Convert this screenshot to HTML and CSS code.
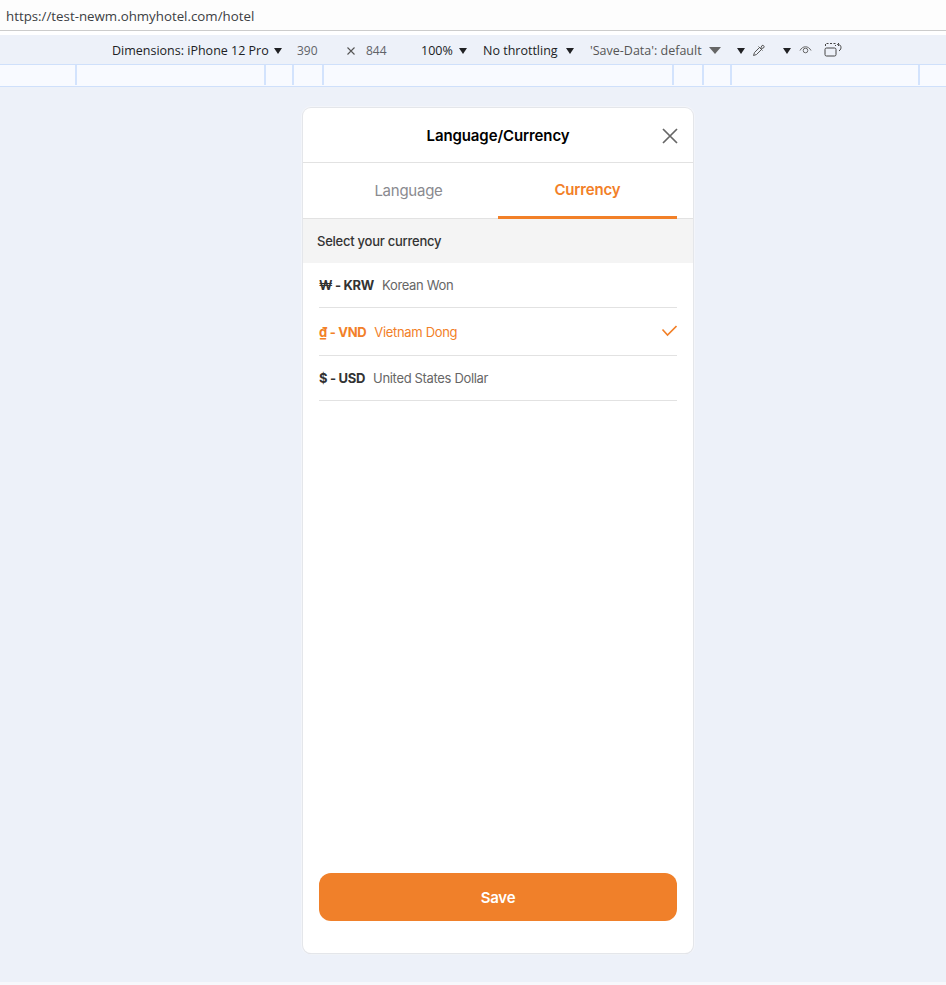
FILE: index.html
```html
<!DOCTYPE html>
<html>
<head>
	<title>hotel</title>
	<link rel="stylesheet" href="styles.css">
</head>
<body>
	<div class="urlbar">https://test-newm.ohmyhotel.com/hotel</div>
	<div class="toolbar">
		<span class="tool w-dim">Dimensions: iPhone 12 Pro <i class="caret"></i></span>
		<span class="tool num w-w">390</span>
		<svg class="times" width="10" height="10" viewBox="0 0 10 10"><path d="M1.5 1.5l7 7M8.5 1.5l-7 7" stroke="#555" stroke-width="1.1" fill="none"/></svg>
		<span class="tool num w-h">844</span>
		<span class="tool w-zoom">100% <i class="caret"></i></span>
		<span class="tool w-net">No throttling <i class="caret"></i></span>
		<span class="tool grey w-save">'Save-Data': default <i class="caret big"></i></span>
		<i class="caret c1"></i>
		<svg class="pipette" width="14" height="14" viewBox="0 0 14 14"><path d="M1.500 12.500l1-3 5-5 2 2-5 5zM6.500 3.500l4 4M8.500 5.500l1.500-3a1.500 1.500 0 0 1 2 2l-3 1.500" stroke="#555" stroke-width="1" fill="none"/></svg>
		<i class="caret c2"></i>
		<svg class="eye" width="13" height="10" viewBox="0 0 13 10"><path d="M1 5.500c2.500-5 8.500-5 11 0" stroke="#666" stroke-width="1" fill="none"/><circle cx="6.500" cy="5.500" r="2.300" stroke="#666" stroke-width="1" fill="none"/></svg>
		<svg class="rotate" width="19" height="15" viewBox="0 0 19 15"><path d="M1.500 4V1.500h10V4" stroke="#444" stroke-width="1" stroke-dasharray="2 1.500" fill="none"/><rect x="1" y="6" width="11" height="8" rx="1.500" stroke="#444" stroke-width="1" fill="none"/><path d="M13.500 2.500c3.500-.5 5 4 1.500 6.500M13.500 2.500l1.500-1.500M13.500 2.500l1.500 1.500" stroke="#444" stroke-width="1" fill="none"/></svg>
	</div>
	<div class="ruler">
		<div class="seg s1"></div>
		<div class="seg s2"></div>
		<div class="seg s3"></div>
		<div class="seg s4"></div>
		<div class="seg s5"></div>
		<div class="seg s6"></div>
		<div class="seg s7"></div>
		<div class="seg s8"></div>
		<div class="seg s9"></div>
	</div>
	<div class="stage">
		<div class="phone">
			<div class="head">
				<h1>Language/Currency</h1>
				<svg class="close" width="18" height="18" viewBox="0 0 18 18"><path d="M2 2l14 14M16 2L2 16" stroke="#666" stroke-width="1.700" fill="none"/></svg>
			</div>
			<div class="tabs">
				<div class="tab">Language</div>
				<div class="tab active">Currency</div>
			</div>
			<div class="label">Select your currency</div>
			<ul class="list">
				<li class="row r1"><b>₩ - KRW</b><span>Korean Won</span></li>
				<li class="row r2 picked"><b>₫ - VND</b><span>Vietnam Dong</span>
					<svg class="check" width="16" height="12" viewBox="0 0 16 12"><path d="M1.500 4.500l5 5.500 9-9" stroke="#f28028" stroke-width="1.600" fill="none"/></svg>
				</li>
				<li class="row r3"><b>$ - USD</b><span>United States Dollar</span></li>
			</ul>
			<div class="foot">
				<button class="save">Save</button>
			</div>
		</div>
	</div>
</body>
</html>
```

FILE: styles.css
```css
*{
	box-sizing: border-box;
}
html,body{
	margin: 0;
	height: 100%;
}
body{
	width: 946px;
	height: 985px;
	overflow: hidden;
	background-color: #fff;
	display: flex;
	flex-direction: column;
	font-family: "Inter", "Liberation Sans", sans-serif;
}

/* browser bits */
.urlbar{
	height: 35px;
	padding: 7px 0 0 6px;
	font-family: "Open Sans", "Noto Sans", sans-serif;
	font-size: 13.3px;
	line-height: 18px;
	color: #3c4043;
	background-image: linear-gradient(#fdfdfd 30px, #ccc 30px, #ccc 31px, #fff 31px);
}
.toolbar{
	height: 29px;
	flex: none;
	display: flex;
	align-items: center;
	background-color: #edf1f9;
	font-family: "Open Sans", "Noto Sans", sans-serif;
	font-size: 12.5px;
	color: #202124;
	white-space: nowrap;
}
.tool{
	display: flex;
	align-items: center;
	gap: 5px;
	flex: none;
	margin-top: 2px;
}
.num{
	color: #5f6368;
	font-size: 12px;
}
.grey{
	color: #555;
}
.w-dim{
	margin-left: 112px;
	width: 185px;
}
.w-w{
	width: 49px;
}
.times{
	margin-top: 2px;
	margin-right: 10px;
}
.w-h{
	width: 55px;
}
.w-zoom{
	width: 62px;
	gap: 6px;
}
.w-net{
	width: 107px;
	gap: 8px;
}
.w-save{
	width: 147px;
	gap: 7px;
}
.caret{
	flex: none;
	width: 0;
	height: 0;
	border-left: 4px solid transparent;
	border-right: 4px solid transparent;
	border-top: 6px solid #202124;
	display: inline-block;
}
.caret.big{
	border-left-width: 6px;
	border-right-width: 6px;
	border-top: 7px solid #666;
}
.c1{
	margin-top: 2px;
	margin-right: 7px;
}
.pipette{
	margin-right: 17px;
}
.c2{
	margin-top: 2px;
	margin-right: 8px;
}
.eye{
	margin-right: 12px;
}
.ruler{
	height: 23px;
	flex: none;
	display: flex;
	background-color: #f8faff;
	border-top: 1px solid #cfe0fb;
	border-bottom: 1px solid #cfe0fb;
}
.seg{
	height: 20px;
	border-right: 2px solid #d3e3fd;
}
.s1{
	width: 77px;
}
.s2{
	width: 189px;
}
.s3{
	width: 28px;
}
.s4{
	width: 30px;
}
.s5{
	width: 350px;
}
.s6{
	width: 30px;
}
.s7{
	width: 28px;
}
.s8{
	width: 188px;
}
.s9{
	width: 26px;
	border-right: 0;
}
.stage{
	flex: 1;
	background-color: #edf1f9;
	padding: 21px 0 0 303px;
	display: flex;
	border-bottom: 3px solid #f7f8fc;
}

/* the phone */
.phone{
	width: 390px;
	height: 845px;
	background-color: #fff;
	border-radius: 8px;
	box-shadow: 0 0 0 1px #e4e6ea, 0 1px 1px #d8d9dd, 0 0 0 2px #f3f5fa;
	display: flex;
	flex-direction: column;
}
.head{
	height: 55px;
	flex: none;
	position: relative;
	display: flex;
	align-items: center;
	justify-content: center;
	border-bottom: 1px solid #e2e2e2;
}
.head h1{
	margin: 0;
	font-size: 15px;
	font-weight: 600;
	letter-spacing: -0.1px;
	color: #000;
}
.close{
	position: absolute;
	right: 14px;
	top: 19px;
}
.tabs{
	height: 56px;
	flex: none;
	padding: 0 16px;
	display: flex;
	border-bottom: 1px solid #e2e2e2;
}
.tab{
	flex: 1;
	display: flex;
	align-items: center;
	justify-content: center;
	padding-bottom: 1px;
	font-size: 15px;
	letter-spacing: -0.25px;
	color: #8a8a8f;
}
.tab.active{
	color: #f28028;
	font-weight: 600;
	letter-spacing: -0.15px;
	padding-bottom: 1px;
	border-bottom: 3px solid #f28028;
	margin-bottom: -1px;
}
.label{
	height: 44px;
	flex: none;
	padding: 0 14px;
	display: flex;
	align-items: center;
	font-size: 13px;
	font-weight: 500;
	letter-spacing: -0.25px;
	color: #333;
	background-color: #f4f4f4;
}
.list{
	list-style: none;
	margin: 0;
	padding: 0 16px;
}
.row{
	display: flex;
	align-items: center;
	gap: 8px;
	font-size: 13px;
	letter-spacing: -0.33px;
	color: #666;
	border-bottom: 1px solid #e2e2e2;
}
.row b{
	font-weight: 700;
	letter-spacing: -0.3px;
	color: #333;
}
.r1{
	height: 45px;
}
.r2{
	height: 48px;
}
.r3{
	height: 45px;
}
.picked,.picked b{
	color: #f28028;
}
.check{
	margin-left: auto;
	margin-bottom: 1px;
}
.foot{
	margin-top: auto;
	padding: 0 16px 32px;
}
.save{
	display: block;
	width: 100%;
	height: 48px;
	border: 0;
	border-radius: 12px;
	background-color: #f0802a;
	color: #fff;
	font-family: inherit;
	font-size: 15px;
	font-weight: 600;
	letter-spacing: -0.2px;
	cursor: pointer;
}
```
